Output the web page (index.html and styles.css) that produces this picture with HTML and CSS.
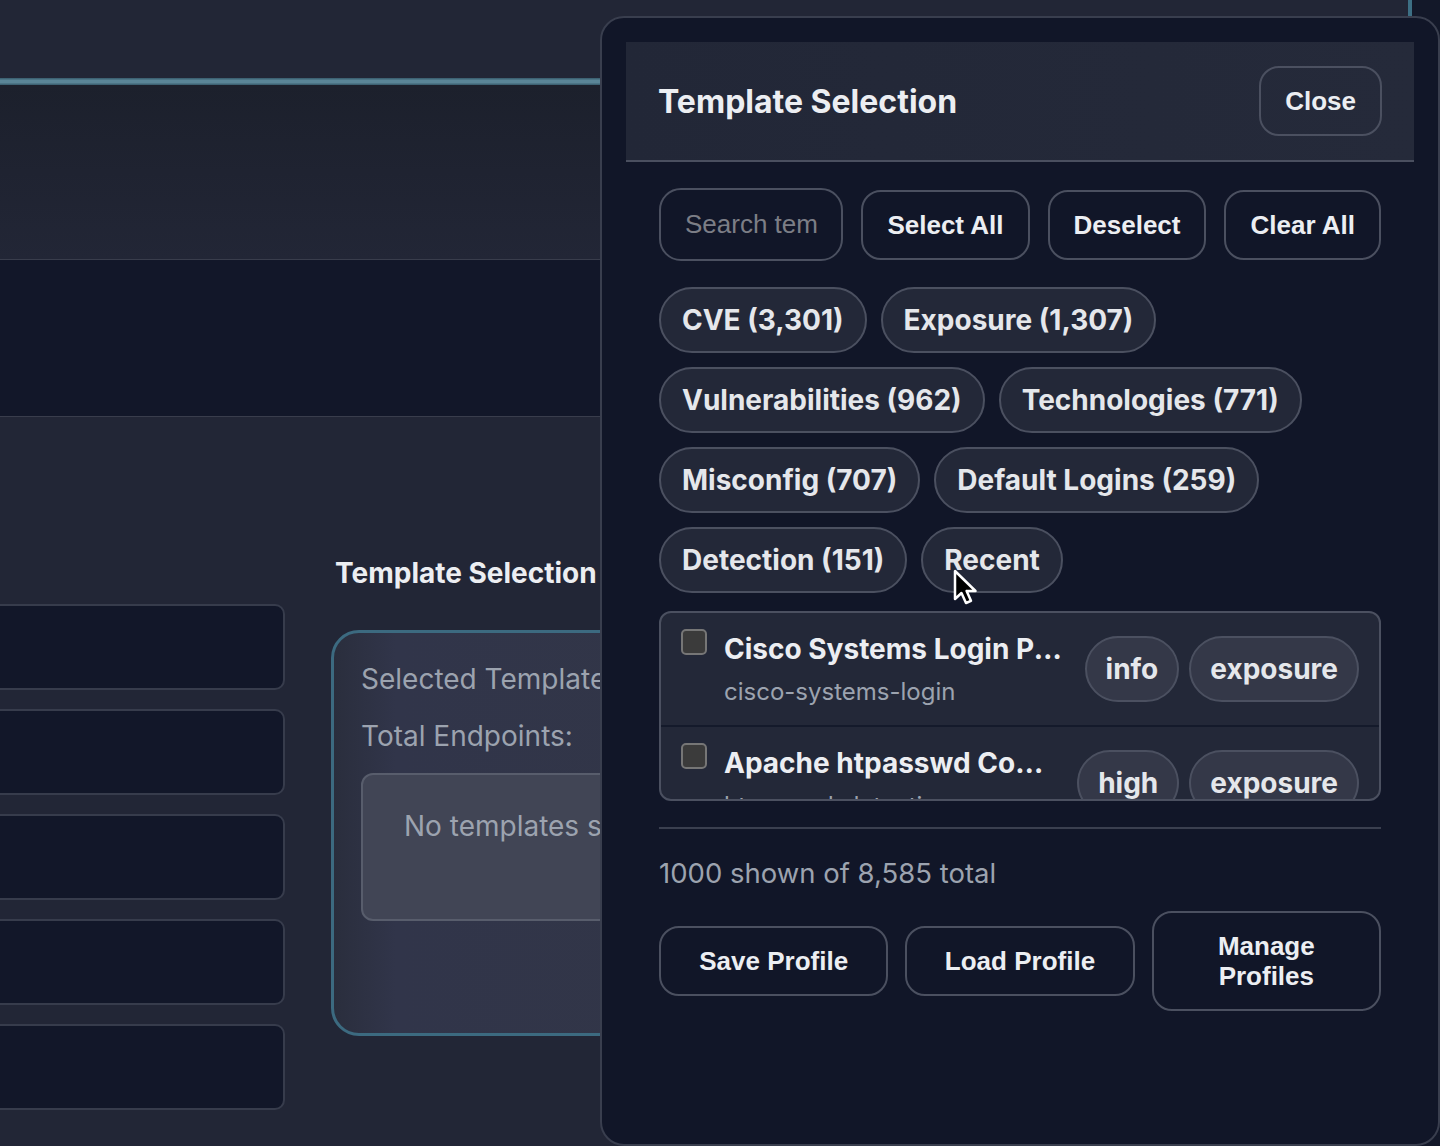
FILE: index.html
```html
<!DOCTYPE html>
<html lang="en">
<head>
<meta charset="utf-8">
<title>Template Selection</title>
<link rel="stylesheet" href="styles.css">
</head>
<body>
<div class="page">
  <div class="main">
    <div class="topbar"></div>
    <div class="accent"></div>
    <div class="hero"></div>
    <div class="band"></div>
    <div class="content">
      <div class="col-left">
        <div class="field"></div>
        <div class="field"></div>
        <div class="field"></div>
        <div class="field"></div>
        <div class="field"></div>
      </div>
      <div class="col-right">
        <h2 class="section-title">Template Selection</h2>
        <div class="selected-box">
          <div class="sel-line">Selected Templates:</div>
          <div class="sel-line sel-gap">Total Endpoints:</div>
          <div class="empty">No templates selected</div>
        </div>
      </div>
    </div>
  </div>
  <div class="strip"></div>
</div>

<aside class="drawer">
  <header class="drawer-head">
    <h2 class="drawer-title">Template Selection</h2>
    <button class="btn">Close</button>
  </header>
  <div class="drawer-body">
    <div class="toolbar">
      <input class="search" type="text" placeholder="Search templates...">
      <button class="btn">Select All</button>
      <button class="btn">Deselect</button>
      <button class="btn">Clear All</button>
    </div>
    <div class="chips">
      <span class="chip">CVE (3,301)</span>
      <span class="chip">Exposure (1,307)</span>
      <span class="chip">Vulnerabilities (962)</span>
      <span class="chip">Technologies (771)</span>
      <span class="chip">Misconfig (707)</span>
      <span class="chip">Default Logins (259)</span>
      <span class="chip">Detection (151)</span>
      <span class="chip">Recent</span>
    </div>
    <div class="list">
      <div class="item">
        <div class="item-main">
          <span class="checkbox"></span>
          <div class="item-text">
            <div class="item-title">Cisco Systems Login Page Detection</div>
            <div class="item-sub">cisco-systems-login</div>
          </div>
        </div>
        <div class="tags">
          <span class="tag">info</span>
          <span class="tag">exposure</span>
        </div>
      </div>
      <div class="item">
        <div class="item-main">
          <span class="checkbox"></span>
          <div class="item-text">
            <div class="item-title">Apache htpasswd Config File</div>
            <div class="item-sub">htpasswd-detection</div>
          </div>
        </div>
        <div class="tags">
          <span class="tag">high</span>
          <span class="tag">exposure</span>
        </div>
      </div>
    </div>
    <hr class="divider">
    <div class="count">1000 shown of 8,585 total</div>
    <div class="actions">
      <button class="btn btn-flex">Save Profile</button>
      <button class="btn btn-flex">Load Profile</button>
      <button class="btn btn-flex">Manage Profiles</button>
    </div>
  </div>
</aside>

<svg class="cursor" width="32" height="40" viewBox="0 0 32 40" aria-hidden="true">
  <path d="M3 2 L3 30 L9.5 24 L14 34 L19 31.8 L14.6 22 L23.5 22 Z" fill="#000" stroke="#fff" stroke-width="2.5" stroke-linejoin="round"/>
</svg>
</body>
</html>
```

FILE: styles.css
```css
html, body {
  margin: 0;
  height: 100%;
  overflow: hidden;
  background: #222636;
  font-family: Inter, "Noto Sans", sans-serif;
  color: #e5e7eb;
}

.page {
  display: flex;
  min-height: 1146px;
}

.main {
  flex: 1;
  min-width: 0;
}

.strip {
  width: 28px;
  border-left: 4px solid #3d6f84;
  background: #131829;
}

.topbar {
  height: 78px;
}

.accent {
  height: 7px;
  background: linear-gradient(#36596a, #5a8597 35%, #5a8597 65%, #36596a);
}

.hero {
  height: 174px;
  background: linear-gradient(#1c202c, #222636);
  border-bottom: 1px solid #393d4c;
}

.band {
  height: 156px;
  background: #121729;
  border-bottom: 1px solid #393d4c;
}

.content {
  display: flex;
  gap: 46px;
  margin-left: -12px;
}

.col-left {
  width: 297px;
  padding-top: 187px;
}

.field {
  height: 86px;
  box-sizing: border-box;
  margin-bottom: 19px;
  background: #121729;
  border: 2px solid #373c4c;
  border-radius: 10px;
}

.col-right {
  width: 520px;
  padding-top: 139px;
}

.section-title {
  margin: 0 0 40px 4px;
  font-size: 28px;
  line-height: 34px;
  font-weight: 700;
  color: #eceef2;
}

.selected-box {
  border: 3px solid #3c6a80;
  border-radius: 28px;
  background: linear-gradient(90deg, #2a2e3d, #31354a 12%, #323646);
  padding: 29px 27px 112px;
}

.sel-line {
  font-size: 28px;
  line-height: 34px;
  color: #9ca3af;
  white-space: nowrap;
}

.sel-gap {
  margin-top: 23px;
}

.empty {
  margin-top: 20px;
  height: 148px;
  box-sizing: border-box;
  border: 2px solid #585d6c;
  border-radius: 12px;
  background: #414555;
  padding: 34px 41px;
  font-size: 28px;
  line-height: 34px;
  color: #9ca3af;
  white-space: nowrap;
}

/* Drawer */
.drawer {
  position: fixed;
  left: 600px;
  top: 16px;
  width: 840px;
  height: 1130px;
  box-sizing: border-box;
  background: #111628;
  border: 2px solid #393e4e;
  border-radius: 24px;
  padding: 24px;
  z-index: 10;
}

.drawer-head {
  display: flex;
  align-items: center;
  justify-content: space-between;
  background: linear-gradient(90deg, #222737, #252a3a);
  padding: 24px 32px;
  border-bottom: 2px solid #4a4f5f;
}

.drawer-title {
  margin: 0;
  font-size: 32px;
  line-height: 38px;
  font-weight: 700;
  color: #eceef2;
  padding-top: 2px;
}

.btn {
  font-family: "Liberation Sans", Arial, sans-serif;
  font-size: 26px;
  line-height: 30px;
  font-weight: 700;
  color: #eceef2;
  background: transparent;
  border: 2px solid #4b5060;
  border-radius: 20px;
  padding: 18px 24px;
  flex: none;
}

.drawer-body {
  padding: 26px 33px 0;
}

.toolbar {
  display: flex;
  align-items: center;
  gap: 18px;
}

.search {
  flex: 1;
  min-width: 0;
  height: 73px;
  box-sizing: border-box;
  background: transparent;
  border: 2px solid #4b5060;
  border-radius: 22px;
  padding: 0 24px;
  font-family: "Liberation Sans", Arial, sans-serif;
  font-size: 26px;
  color: #eceef2;
  outline: none;
}

.search::placeholder {
  color: #7c7e86;
}

.chips {
  margin-top: 26px;
  display: flex;
  flex-wrap: wrap;
  gap: 14px;
}

.chip,
.tag {
  display: inline-block;
  padding: 14px 21px;
  border: 2px solid #4b5060;
  border-radius: 999px;
  background: #232838;
  font-size: 28px;
  line-height: 34px;
  font-weight: 700;
  color: #e5e7eb;
  white-space: nowrap;
}

.tag {
  padding: 14px 19px;
  background: #343848;
}

.list {
  margin-top: 18px;
  height: 190px;
  box-sizing: border-box;
  border: 2px solid #4b5060;
  border-radius: 12px;
  background: #232838;
  overflow: hidden;
}

.item {
  display: flex;
  align-items: center;
  gap: 18px;
  padding: 19px 20px;
  border-bottom: 2px solid #141a2b;
}

.item-main {
  display: flex;
  align-items: flex-start;
  gap: 17px;
  flex: 1;
  min-width: 0;
}

.checkbox {
  flex: none;
  width: 26px;
  height: 26px;
  box-sizing: border-box;
  margin-top: -3px;
  background: #3b3b3b;
  border: 2px solid #767676;
  border-radius: 5px;
}

.item-text {
  flex: 1;
  min-width: 0;
}

.item-title {
  font-size: 28px;
  line-height: 34px;
  font-weight: 700;
  color: #eceef2;
  white-space: nowrap;
  overflow: hidden;
  text-overflow: ellipsis;
}

.item-sub {
  margin-top: 11px;
  font-size: 24px;
  line-height: 29px;
  color: #9ca3af;
  white-space: nowrap;
}

.tags {
  display: flex;
  gap: 10px;
  flex: none;
}

.divider {
  margin: 26px 0 0;
  border: 0;
  height: 2px;
  background: #3a3f4f;
}

.count {
  margin-top: 28px;
  font-size: 27.5px;
  line-height: 33px;
  color: #9ca3af;
}

.actions {
  margin-top: 21px;
  display: flex;
  align-items: center;
  gap: 17px;
}

.btn-flex {
  flex: 1 1 0;
  min-width: 0;
}

.cursor {
  position: fixed;
  left: 952px;
  top: 569px;
  z-index: 20;
}
```
